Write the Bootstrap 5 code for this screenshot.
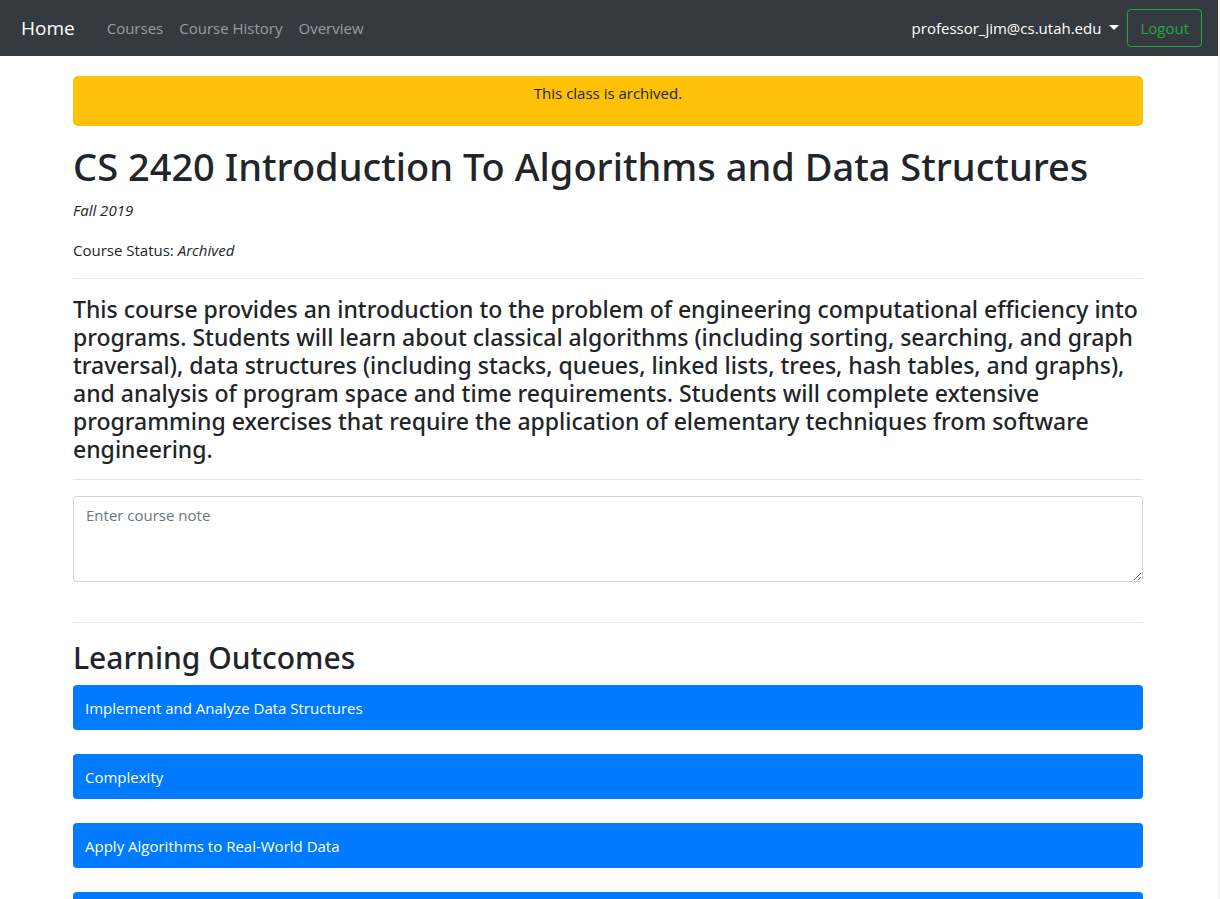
<!DOCTYPE html>
<html lang="en">
<head>
<meta charset="utf-8">
<meta name="viewport" content="width=device-width, initial-scale=1">
<title>CS 2420 - Course Details</title>
<link href="https://cdn.jsdelivr.net/npm/bootstrap@5.3.0/dist/css/bootstrap.min.css" rel="stylesheet">
<style>
body { font-family: "Open Sans", "Noto Sans", sans-serif; font-size: 15px; font-weight: 400; line-height: 24px; color: #212529; border-right: 2px solid #f1f1f1; }
.site-nav { background: #343a40; min-height: 56px; padding: 8px 16px 8px 21px; --bs-navbar-color: #9a9da0; }
.site-nav .navbar-brand { font-size: 19px; line-height: 30px; margin-right: 24px; padding: 4px 0; }
.site-nav .nav-link { padding: 8px; }
.site-nav .user-link { color: #fff; }
.site-nav .user-link::after { margin-left: 8px; border-width: 5px 5px 0; }
.btn-logout { --bs-btn-color: #28a745; --bs-btn-border-color: #28a745; --bs-btn-hover-color: #fff; --bs-btn-hover-bg: #28a745; --bs-btn-border-radius: 4px; --bs-btn-font-size: 15px; --bs-btn-padding-x: 12px; line-height: 24px; }
.page-body { max-width: 1102px; padding: 20px 17px 0 15px; }
.archived-banner { background: #ffc107; border-radius: 5px; min-height: 50px; padding: 5px; }
h1, h2, .course-summary { font-family: "Noto Sans", "Open Sans", sans-serif; font-weight: 500; }
h1 { font-size: 38px; line-height: 48px; }
h2 { font-size: 30px; line-height: 38px; }
.course-summary { font-size: 23px; line-height: 28px; }
hr { border-color: #000; opacity: .1; }
.course-note { border-color: #ced4da; border-radius: 4px; font-size: 15px; line-height: 24px; min-height: 86px; padding: 6px 12px; margin-bottom: 40px; }
.course-note::placeholder { color: #6c757d; }
.outcome { background: #007bff; color: #fff; border: 0; border-radius: 4px; padding: 11px 12px 10px; text-align: left; }
</style>
</head>
<body>
<nav class="navbar navbar-expand-lg navbar-dark site-nav">
  <a class="navbar-brand" href="#">Home</a>
  <button class="navbar-toggler" type="button" data-bs-toggle="collapse" data-bs-target="#siteMenu" aria-label="Toggle navigation"><span class="navbar-toggler-icon"></span></button>
  <div class="collapse navbar-collapse" id="siteMenu">
    <ul class="navbar-nav me-auto">
      <li class="nav-item"><a class="nav-link" href="#">Courses</a></li>
      <li class="nav-item"><a class="nav-link" href="#">Course History</a></li>
      <li class="nav-item"><a class="nav-link" href="#">Overview</a></li>
    </ul>
    <ul class="navbar-nav">
      <li class="nav-item dropdown">
        <a class="nav-link dropdown-toggle user-link" href="#" role="button" data-bs-toggle="dropdown" aria-expanded="false">professor_jim@cs.utah.edu</a>
        <ul class="dropdown-menu dropdown-menu-end"><li><a class="dropdown-item" href="#">Profile</a></li></ul>
      </li>
    </ul>
    <button type="button" class="btn btn-logout">Logout</button>
  </div>
</nav>
<main class="container page-body">
  <div class="archived-banner text-center mb-3">This class is archived.</div>
  <h1 class="mb-2">CS 2420 Introduction To Algorithms and Data Structures</h1>
  <p class="mb-3"><em>Fall 2019</em></p>
  <p class="mb-3">Course Status: <em>Archived</em></p>
  <hr class="my-3">
  <h4 class="course-summary mb-3">This course provides an introduction to the problem of engineering computational efficiency into programs. Students will learn about classical algorithms (including sorting, searching, and graph traversal), data structures (including stacks, queues, linked lists, trees, hash tables, and graphs), and analysis of program space and time requirements. Students will complete extensive programming exercises that require the application of elementary techniques from software engineering.</h4>
  <hr class="my-3">
  <textarea class="form-control course-note" rows="3" placeholder="Enter course note" aria-label="Course note"></textarea>
  <hr class="mb-3">
  <h2 class="mb-2">Learning Outcomes</h2>
  <div class="d-grid gap-4">
    <button type="button" class="outcome">Implement and Analyze Data Structures</button>
    <button type="button" class="outcome">Complexity</button>
    <button type="button" class="outcome">Apply Algorithms to Real-World Data</button>
    <button type="button" class="outcome" aria-label="Next outcome">&nbsp;</button>
  </div>
</main>
<script src="https://cdn.jsdelivr.net/npm/bootstrap@5.3.0/dist/js/bootstrap.bundle.min.js"></script>
</body>
</html>
